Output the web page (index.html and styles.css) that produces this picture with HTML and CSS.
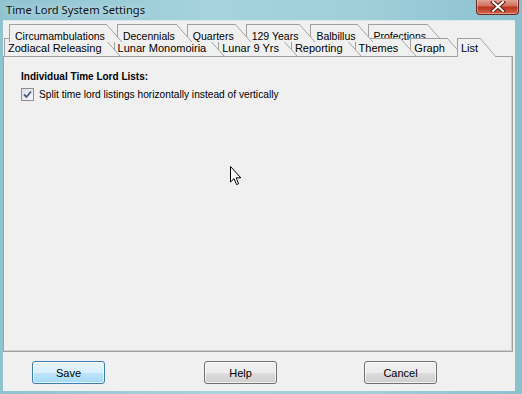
FILE: index.html
```html
<!DOCTYPE html>
<html lang="en">
<head>
  <meta charset="UTF-8" />
  <title>Time Lord System Settings</title>
  <link rel="stylesheet" href="styles.css">
</head>
<body>

  <div class="window">
    <div class="titlebar">
      <span class="title">Time Lord System Settings</span>
      <div class="close">
        <svg width="16" height="11" viewBox="0 0 16 11">
          <path d="M3 1 L13 10 M13 1 L3 10" stroke="#5a1a14" stroke-width="4" stroke-linecap="square" />
          <path d="M3 1 L13 10 M13 1 L3 10" stroke="#fff" stroke-width="2" stroke-linecap="square" />
        </svg>
      </div>
    </div>

    <div class="client">
      <div class="tabs">
        <div class="tab-row back">
          <div class="tab"><span>Circumambulations</span></div>
          <div class="tab"><span>Decennials</span></div>
          <div class="tab"><span>Quarters</span></div>
          <div class="tab"><span>129 Years</span></div>
          <div class="tab"><span>Balbillus</span></div>
          <div class="tab"><span>Profections</span></div>
        </div>
        <div class="tab-row front">
          <div class="tab"><span>Zodiacal Releasing</span></div>
          <div class="tab"><span>Lunar Monomoiria</span></div>
          <div class="tab"><span>Lunar 9 Yrs</span></div>
          <div class="tab"><span>Reporting</span></div>
          <div class="tab"><span>Themes</span></div>
          <div class="tab"><span>Graph</span></div>
          <div class="tab active"><span>List</span></div>
        </div>
      </div>

      <div class="panel">
        <div class="group-title">Individual Time Lord Lists:</div>
        <label class="check">
          <span class="box">
            <svg width="9" height="9" viewBox="0 0 9 9">
              <path d="M1 4.5 L3.5 7 L8 1.5" fill="none" stroke="#4b5a8e" stroke-width="1.8" />
            </svg>
          </span>
          Split time lord listings horizontally instead of vertically
        </label>

        <svg class="cursor" width="13" height="20" viewBox="0 0 13 20">
          <path d="M0.5 0.5 L0.5 16 L4 12.6 L6.6 18.6 L8.6 17.7 L6.1 11.8 L10.8 11.8 Z" fill="#fff" stroke="#000" stroke-width="1" />
        </svg>
      </div>

      <div class="buttons">
        <button class="btn default">Save</button>
        <button class="btn help">Help</button>
        <button class="btn cancel">Cancel</button>
      </div>
    </div>
  </div>

</body>
</html>
```

FILE: styles.css
```css
body {
  margin: 0;
  width: 522px;
  height: 394px;
  overflow: hidden;
  font-family: "Liberation Sans", Arial, sans-serif;
  font-size: 11px;
  color: #000;
}
.window {
  width: 522px;
  height: 394px;
  background: linear-gradient(to right, #8fc3d0, #a6d3dd 40%, #9fcfd9 70%, #8bc1cf);
  padding: 0 7px 3px 3px;
  box-sizing: border-box;
  display: flex;
  flex-direction: column;
}
.titlebar {
  height: 20px;
  display: flex;
  align-items: flex-start;
  justify-content: space-between;
  flex-shrink: 0;
}
.title {
  font-family: "Noto Sans", sans-serif;
  font-size: 11.2px;
  margin: 2px 0 0 3px;
  color: #111;
  text-shadow: 0 0 6px #d8eef2;
}
.close {
  width: 41px;
  height: 15px;
  margin-right: -4px;
  margin-top: -1px;
  border: 1px solid #6a2a24;
  border-top: none;
  border-radius: 0 0 4px 4px;
  background: linear-gradient(#e6aa9c, #d2705e 45%, #b8341f 55%, #d4664a);
  display: flex;
  align-items: center;
  justify-content: center;
  box-shadow: inset 0 0 0 1px rgba(255,255,255,0.35);
}
.client {
  flex: 1;
  background: #f0f0f0;
  border-top: 1px solid #d8e8ec;
  position: relative;
}

/* tabs */
.tabs {
  padding-top: 3px;
}
.tab-row {
  display: flex;
  height: 18px;
  font-size: 10.5px;
}
.tab-row.back {
  padding-left: 6px;
}
.tab-row.front {
  margin-top: -4px;
  padding-left: 1px;
  position: relative;
  z-index: 2;
  font-size: 11px;
}
.tab {
  display: flex;
  position: relative;
  margin-right: -6px;
}
.tab span {
  border-left: 1px solid #a0a0a0;
  border-top: 1px solid #a0a0a0;
  background: #f0f0f0;
  padding: 2px 2px 0 3px;
  white-space: nowrap;
  line-height: 14px;
}
.tab::after {
  content: "";
  width: 16px;
  background: linear-gradient(to bottom left, transparent calc(50% - 0.7px), #a0a0a0 50%, #f0f0f0 calc(50% + 0.7px));
}
.back .tab {
  margin-right: -5px;
}
.back .tab span {
  padding: 4px 1px 0 5px;
}
.tab:nth-child(1) { z-index: 7; }
.tab:nth-child(2) { z-index: 6; }
.tab:nth-child(3) { z-index: 5; }
.tab:nth-child(4) { z-index: 4; }
.tab:nth-child(5) { z-index: 3; }
.tab:nth-child(6) { z-index: 2; }
.tab.active {
  z-index: 8;
  height: 19px;
}

/* panel */
.panel {
  position: relative;
  height: 296px;
  width: 510px;
  box-sizing: border-box;
  border: 1px solid #a0a0a0;
  box-shadow: inset -1px -1px 0 #d0d0d0;
  padding: 14px 17px;
}
.group-title {
  font-weight: bold;
  font-size: 10px;
  margin-bottom: 6px;
}
.check {
  display: flex;
  align-items: center;
  gap: 5px;
  font-size: 10.2px;
}
.box {
  width: 11px;
  height: 11px;
  border: 1px solid #8f8f8f;
  background: linear-gradient(135deg, #dcdfe8, #f6f7fa);
  display: flex;
  align-items: center;
  justify-content: center;
}
.cursor {
  position: absolute;
  left: 226px;
  top: 109px;
}

/* buttons */
.buttons {
  display: flex;
  padding: 9px 0 0 29px;
}
.btn {
  width: 73px;
  height: 23px;
  font-family: "Liberation Sans", Arial, sans-serif;
  font-size: 11px;
  color: #000;
  border: 1px solid #707070;
  border-radius: 3px;
  background: linear-gradient(#f2f2f2, #ebebeb 50%, #dddddd 51%, #cfcfcf);
  box-shadow: inset 0 0 0 1px rgba(255,255,255,0.7);
  padding: 0;
}
.btn.default {
  border-color: #3c7fb1;
  background: linear-gradient(#eaf6fd, #d9f0fc 50%, #bee6fd 51%, #a7d9f5);
}
.btn.help {
  margin-left: 99px;
}
.btn.cancel {
  margin-left: 87px;
}
```
